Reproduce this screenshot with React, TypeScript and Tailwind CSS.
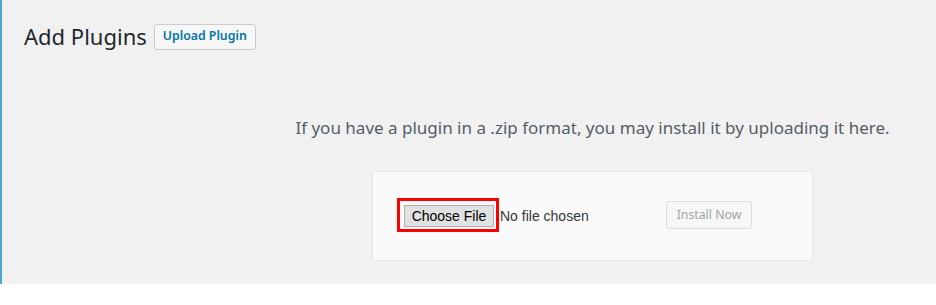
export default function App() {
  return (
    <div className="h-[284px] overflow-hidden border-l-2 border-[#4ba7d1] bg-[#f1f1f1] font-['Noto_Sans',sans-serif]">
      <div className="w-[1159px] pl-[22px]">
        {/* Page title */}
        <div className="flex items-center gap-[7px] pt-[22px]">
          <h1 className="text-[22px] leading-[29px] font-normal text-[#23282d]">Add Plugins</h1>
          <button className="h-[26px] w-[102px] rounded-[3px] border border-[#cccccc] bg-[#f7f7f7] text-[12.3px] font-semibold text-[#0073aa]">
            Upload Plugin
          </button>
        </div>

        {/* Upload form */}
        <div className="text-center">
          <p className="pt-[63px] text-[17px] leading-[27px] text-[#555d66]">
            If you have a plugin in a .zip format, you may install it by uploading it here.
          </p>
          <div className="mx-auto mt-[30px] flex h-[90px] w-[441px] items-start border border-[#e5e5e5] bg-[#fafafa] pt-[29px] pl-[31px]">
            <div className="mt-[4px] flex w-[262px] items-center">
              <span className="relative">
                <button className="block h-[22px] w-[90px] border border-[#adadad] bg-[#e1e1e1] font-['Liberation_Sans',sans-serif] text-[14px] text-black">
                  Choose File
                </button>
                <span className="pointer-events-none absolute -top-[7px] -right-[5px] -bottom-[5px] -left-[7px] border-[3px] border-[#ff0000]" />
              </span>
              <span className="ml-[6px] font-['Liberation_Sans',sans-serif] text-[14px] text-[#32373c]">No file chosen</span>
            </div>
            <button className="h-[28px] w-[86px] rounded-[3px] border border-[#dddddd] bg-[#f7f7f7] text-[12.3px] text-[#a0a5aa]">
              Install Now
            </button>
          </div>
        </div>
      </div>
    </div>
  );
}
